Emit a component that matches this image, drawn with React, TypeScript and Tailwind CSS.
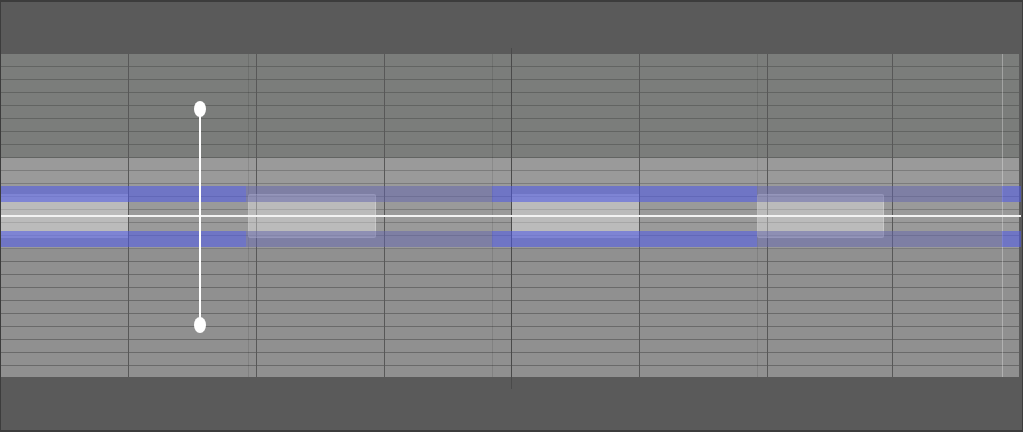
import React from "react";

// piano-roll style lane grid with a selection band and a range handle

const rowBands = [
  { count: 8, bg: "bg-[#7b7d7b]", line: "border-[#626462]" },
  { count: 7, bg: "bg-[#9a9a9a]", line: "border-[#7c7c7c]" },
  { count: 10, bg: "bg-[#909090]", line: "border-[#6a6a6a]" },
];

const columns = [
  "w-[128px] border-r",
  "w-[128px] border-r",
  "w-[128px] border-r",
  "w-[128px]",
  "w-[127px] border-r",
  "w-[128px] border-r",
  "w-[125px] border-r",
  "flex-1",
];

const segments = [
  { w: "w-[245px]", dim: false },
  { w: "w-[246px]", dim: true },
  { w: "w-[265px]", dim: false },
  { w: "w-[245px]", dim: true },
  { w: "w-[19px]", dim: false },
];

// selected cells and the empty space between them
const cells = [
  { w: "w-[127px]", on: true, edge: false },
  { w: "w-[120px]", on: false, edge: false },
  { w: "w-[128px]", on: true, edge: true },
  { w: "w-[136px]", on: false, edge: false },
  { w: "w-[127px]", on: true, edge: false },
  { w: "w-[118px]", on: false, edge: false },
  { w: "w-[127px]", on: true, edge: true },
];

const Segment = ({ w, dim }: { w: string; dim: boolean }) => {
  const blue = dim ? "bg-[rgba(98,100,174,0.5)]" : "bg-[rgba(80,90,230,0.57)]";
  return (
    <div className={`${w} flex flex-col shrink-0`}>
      <div className={`h-[16px] ${blue}`} />
      <div className="h-[29px]" />
      <div className={`h-[16px] ${blue}`} />
    </div>
  );
};

const Knob = () => <div className="w-[12px] h-[16px] rounded-[50%] bg-white shrink-0" />;

const App = () => {
  return (
    <div className="w-[1023px] h-[432px] bg-[#5a5a5a] border-t-2 border-b-2 border-x border-[#3c3c3c] flex flex-col">
      <div className="h-[52px] shrink-0" />

      <div className="relative h-[323px] w-[1018px] shrink-0">
        {/* rows */}
        <div className="h-full overflow-hidden flex flex-col">
          {rowBands.map((band, b) =>
            Array.from({ length: band.count }).map((_, i) => (
              <div
                key={`${b}-${i}`}
                className={`h-[13px] shrink-0 border-b ${band.bg} ${band.line}`}
              />
            ))
          )}
        </div>

        {/* bar columns */}
        <div className="absolute inset-0 flex">
          {columns.map((c, i) => (
            <div key={i} className={`${c} h-full shrink-0 border-[#585858]`} />
          ))}
        </div>

        {/* faint beat lines */}
        <div className="absolute top-0 bottom-0 left-[247px] w-px bg-[rgba(0,0,0,0.1)]" />
        <div className="absolute top-0 bottom-0 left-[491px] w-px bg-[rgba(0,0,0,0.1)]" />
        <div className="absolute top-0 bottom-0 left-[756px] w-px bg-[rgba(0,0,0,0.1)]" />
        <div className="absolute top-0 bottom-0 left-[1001px] w-px bg-[rgba(255,255,255,0.3)]" />
        <div className="absolute -top-[6px] h-[341px] left-[510px] w-px bg-[#4a4a4a]" />

        {/* selected cells */}
        <div className="absolute top-[140px] left-0 h-[44px] flex">
          {cells.map((c, i) => (
            <div
              key={i}
              className={`${c.w} h-full shrink-0 ${
                c.on ? "bg-[rgba(255,255,255,0.33)]" : ""
              } ${c.edge ? "rounded-[2px] border border-[rgba(255,255,255,0.2)]" : ""}`}
            />
          ))}
        </div>

        {/* selection band */}
        <div className="absolute top-[132px] left-0 flex">
          {segments.map((s, i) => (
            <Segment key={i} w={s.w} dim={s.dim} />
          ))}
        </div>

        {/* playhead line */}
        <div className="absolute top-[161px] left-0 w-[1020px] h-[2px] bg-[#f2f2f2]" />

        {/* range handle */}
        <div className="absolute top-[47px] left-[193px] w-[12px] h-[232px] flex flex-col items-center">
          <Knob />
          <div className="w-[2px] flex-1 -my-[6px] bg-white" />
          <Knob />
        </div>
      </div>

      <div className="flex-1" />
    </div>
  );
};

export default App;
